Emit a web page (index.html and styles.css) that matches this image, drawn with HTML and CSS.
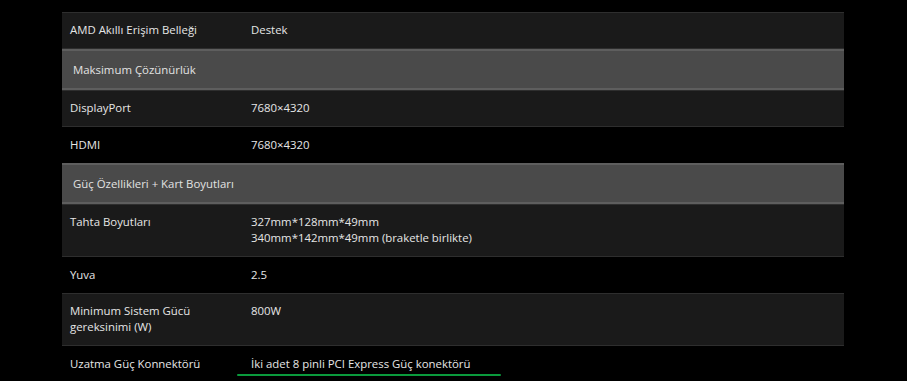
FILE: index.html
```html
<!DOCTYPE html>
<html lang="tr">
<head>
<meta charset="utf-8">
<title>Özellikler</title>
<link rel="stylesheet" href="styles.css">
</head>
<body>
<div class="specs">
  <div class="row dark">
    <div class="label">AMD Akıllı Erişim Belleği</div>
    <div class="value">Destek</div>
  </div>
  <div class="group">Maksimum Çözünürlük</div>
  <div class="row dark">
    <div class="label">DisplayPort</div>
    <div class="value">7680×4320</div>
  </div>
  <div class="row">
    <div class="label">HDMI</div>
    <div class="value">7680×4320</div>
  </div>
  <div class="group">Güç Özellikleri + Kart Boyutları</div>
  <div class="row dark">
    <div class="label">Tahta Boyutları</div>
    <div class="value">327mm*128mm*49mm<br>340mm*142mm*49mm (braketle birlikte)</div>
  </div>
  <div class="row">
    <div class="label">Yuva</div>
    <div class="value">2.5</div>
  </div>
  <div class="row dark">
    <div class="label">Minimum Sistem Gücü<br>gereksinimi (W)</div>
    <div class="value">800W</div>
  </div>
  <div class="row">
    <div class="label">Uzatma Güç Konnektörü</div>
    <div class="value">İki adet 8 pinli PCI Express Güç konektörü<span class="focus-line"></span></div>
  </div>
</div>
</body>
</html>
```
FILE: styles.css
```css
html, body {
  margin: 0;
  padding: 0;
  background: #000;
}
body {
  font-family: "Open Sans", "Liberation Sans", sans-serif;
  font-size: 11.4px;
  line-height: 16px;
  color: #e6e6e6;
  height: 381px;
  overflow: hidden;
}
.specs {
  width: 782px;
  margin: 12px 0 0 62px;
}
.row {
  display: grid;
  grid-template-columns: 189px 1fr;
  padding: 10px 0;
  background: #000;
}
.row.dark {
  background: #1a1a1a;
  border-top: 1px solid #2e2e2e;
  border-bottom: 1px solid #2e2e2e;
  padding: 9px 0 10px;
}
.label {
  padding-left: 8px;
}
.group {
  background: #4a4a4a;
  border-top: 2px solid #5e5e5e;
  border-bottom: 2px solid #5e5e5e;
  padding: 11px 0 10px 11px;
  color: #e2e2e2;
}
.focus-line {
  display: block;
  width: 264px;
  height: 2px;
  margin: 2px 0 0 -14px;
  background: #0a9a3c;
  border-radius: 1px;
}
```
